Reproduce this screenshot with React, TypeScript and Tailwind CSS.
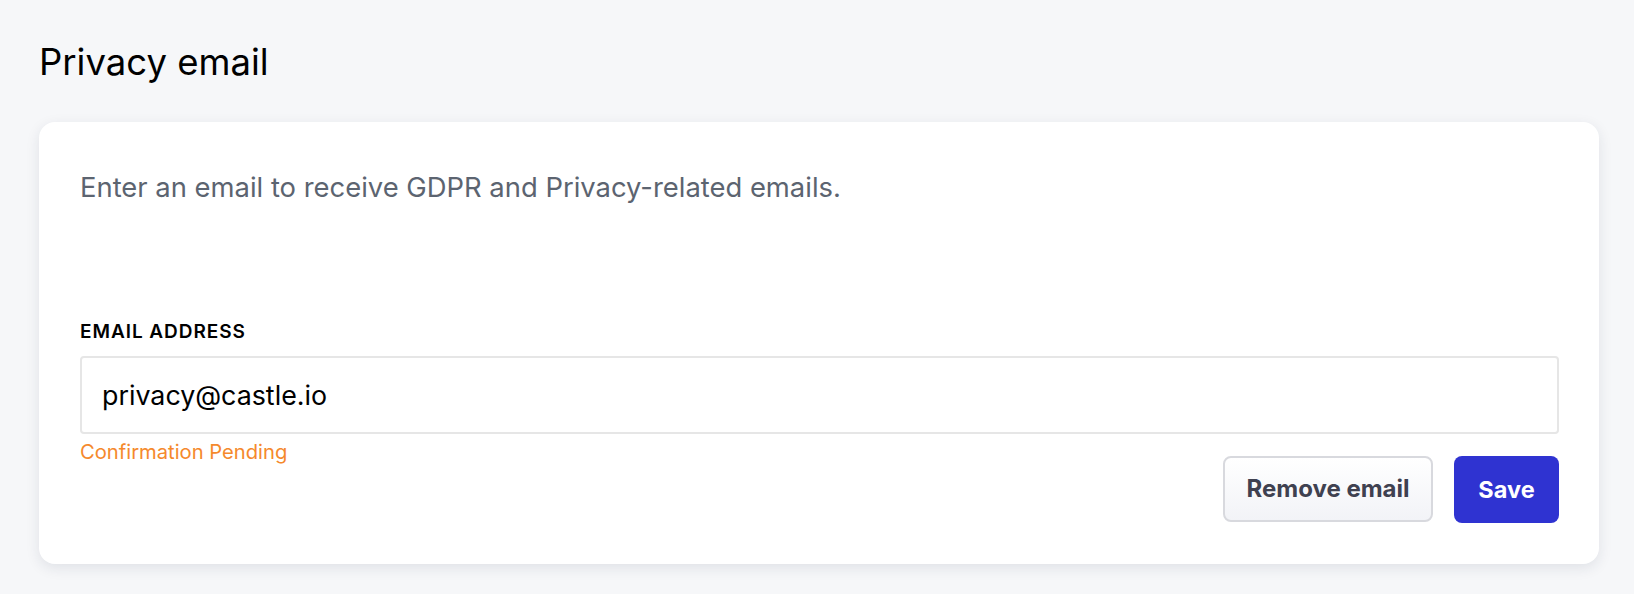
import { useState } from 'react';

export default function App() {
  const [email, setEmail] = useState('privacy@castle.io');

  return (
    <div className="min-h-screen w-full bg-[#f6f7f9] px-[39px] pt-[40px] font-['Inter','Noto_Sans',sans-serif]">
      <h1 className="text-[36.5px] leading-[45px] text-black">Privacy email</h1>

      <div className="mt-[37px] w-[1560px] rounded-2xl bg-white pl-[41px] pr-[40px] pt-[45px] pb-[41px] shadow-[0_4px_14px_rgba(30,40,70,0.10)]">
        <p className="text-[27.4px] leading-[40px] text-[#5c6470]">
          Enter an email to receive GDPR and Privacy-related emails.
        </p>

        <label className="mt-[113px] block text-[19px] font-semibold leading-[24px] tracking-[0.05em] text-black">
          EMAIL ADDRESS
        </label>
        <input
          value={email}
          onChange={(e) => setEmail(e.target.value)}
          className="mt-[12px] block h-[78px] w-full rounded-[4px] border-2 border-[#e6e6e6] px-[20px] text-[26.8px] text-black outline-none"
        />

        <div className="flex items-start justify-between">
          <span className="mt-[6px] text-[20.2px] leading-[24px] text-[#f5892c]">Confirmation Pending</span>
          <div className="mt-[22px] flex gap-[21px]">
            <button className="h-[66px] w-[210px] rounded-[8px] border-2 border-[#d8d9de] bg-gradient-to-b from-white to-[#f2f3f7] text-[24px] font-bold text-[#3f4150]">
              Remove email
            </button>
            <button className="h-[67px] w-[105px] rounded-[8px] bg-[#2f33d1] text-[23.5px] font-bold text-white">
              Save
            </button>
          </div>
        </div>
      </div>
    </div>
  );
}
